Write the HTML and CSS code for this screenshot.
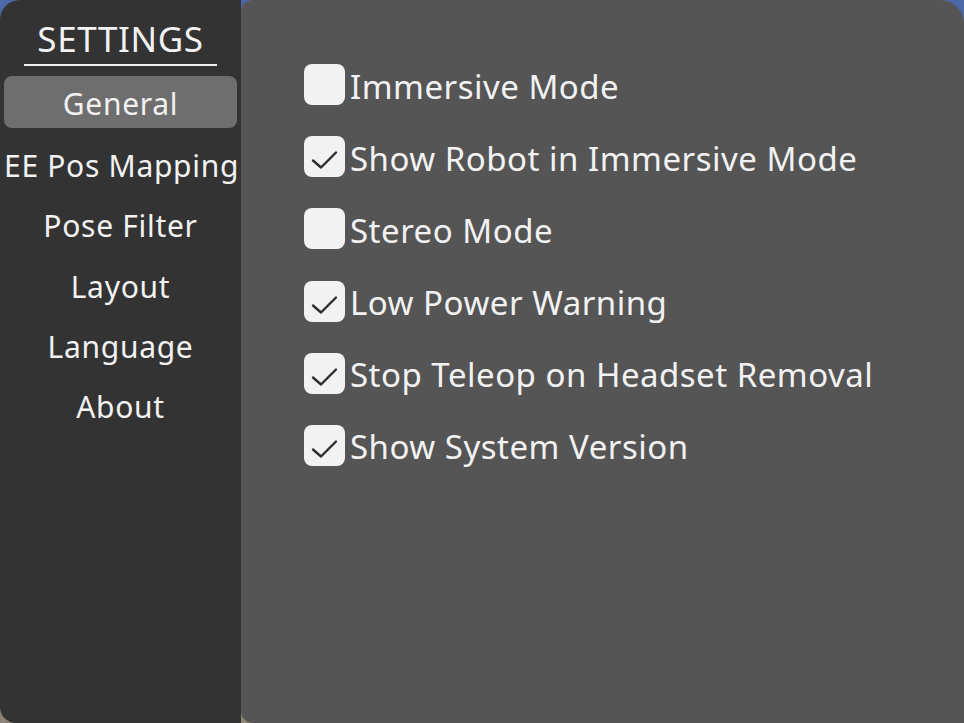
FILE: index.html
```html
<!DOCTYPE html>
<html>
<head>
<meta charset="utf-8">
<link rel="stylesheet" href="styles.css">
</head>
<body>
<div class="app">
  <aside class="sidebar">
    <div class="title">SETTINGS</div>
    <nav class="nav">
      <div class="nav-item active">General</div>
      <div class="nav-item">EE Pos Mapping</div>
      <div class="nav-item">Pose Filter</div>
      <div class="nav-item">Layout</div>
      <div class="nav-item">Language</div>
      <div class="nav-item">About</div>
    </nav>
  </aside>
  <main class="panel">
    <div class="option"><span class="box"></span><span class="label">Immersive Mode</span></div>
    <div class="option"><span class="box"><svg viewBox="0 0 41 40" class="check"><path d="M9 24 L17 31 L32 16"/></svg></span><span class="label">Show Robot in Immersive Mode</span></div>
    <div class="option"><span class="box"></span><span class="label">Stereo Mode</span></div>
    <div class="option"><span class="box"><svg viewBox="0 0 41 40" class="check"><path d="M9 24 L17 31 L32 16"/></svg></span><span class="label">Low Power Warning</span></div>
    <div class="option"><span class="box"><svg viewBox="0 0 41 40" class="check"><path d="M9 24 L17 31 L32 16"/></svg></span><span class="label">Stop Teleop on Headset Removal</span></div>
    <div class="option"><span class="box"><svg viewBox="0 0 41 40" class="check"><path d="M9 24 L17 31 L32 16"/></svg></span><span class="label">Show System Version</span></div>
  </main>
</div>
</body>
</html>
```

FILE: styles.css
```css
html, body {
  margin: 0;
  padding: 0;
  width: 964px;
  height: 723px;
  overflow: hidden;
}
body {
  background: linear-gradient(180deg, #4d68a8 0%, #5a6478 50%, #8c8476 100%);
  font-family: "Noto Sans", "Open Sans", sans-serif;
  color: #f2f2f2;
}
.app {
  display: flex;
  width: 964px;
  height: 723px;
}
.sidebar {
  width: 241px;
  flex: none;
  background: #333333;
  border-radius: 20px 0 0 16px;
  display: flex;
  flex-direction: column;
  align-items: center;
  padding-top: 16px;
  box-sizing: border-box;
}
.title {
  font-size: 35px;
  line-height: 46px;
  width: 193px;
  text-align: center;
  border-bottom: 2px solid #f2f2f2;
  padding-bottom: 2px;
  margin-bottom: 10px;
  letter-spacing: 0.6px;
}
.nav {
  display: flex;
  flex-direction: column;
  width: 233px;
  gap: 8.2px;
}
.nav-item {
  height: 52px;
  line-height: 52px;
  padding-top: 4px;
  box-sizing: border-box;
  text-align: center;
  font-size: 30px;
  border-radius: 8px;
  white-space: nowrap;
  letter-spacing: 0.7px;
}
.nav-item.active {
  background: #6e6e6e;
  line-height: 48px;
}
.panel {
  flex: 1;
  background: #555555;
  border-radius: 12px 24px 0 12px;
  padding: 64px 0 0 63px;
  display: flex;
  flex-direction: column;
  gap: 31.2px;
}
.option {
  display: flex;
  align-items: center;
  height: 41px;
}
.box {
  width: 41px;
  height: 41px;
  flex: none;
  background: #f2f2f2;
  border-radius: 8px;
  margin-right: 5px;
  display: flex;
}
.check {
  width: 41px;
  height: 41px;
  fill: none;
  stroke: #2e2e2e;
  stroke-width: 2.4;
  stroke-linecap: round;
  stroke-linejoin: round;
}
.label {
  font-size: 33px;
  line-height: 41px;
  padding-top: 3px;
  white-space: nowrap;
  letter-spacing: 0.5px;
}
```
